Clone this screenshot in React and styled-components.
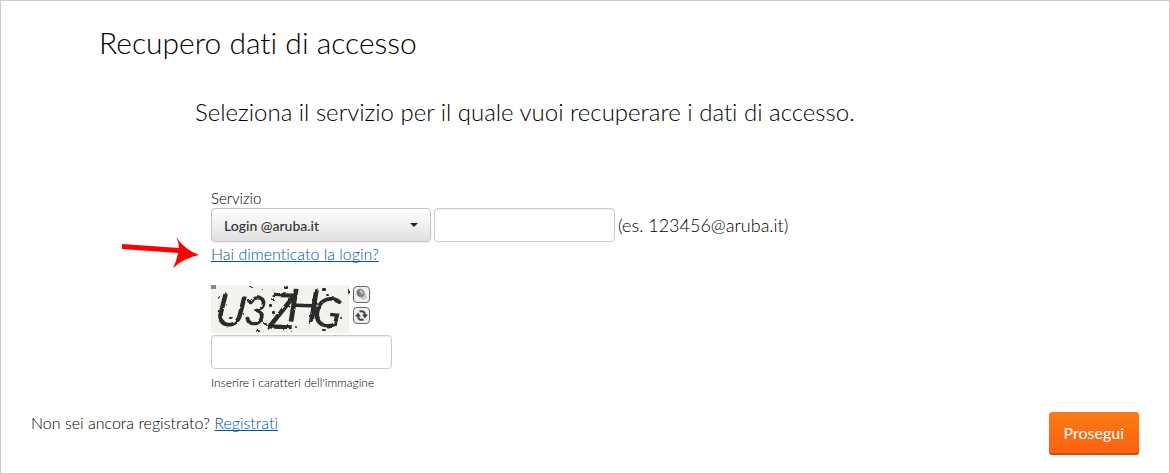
import React, { useState } from 'react'
import styled, { createGlobalStyle } from 'styled-components'

const GlobalStyle = createGlobalStyle`
  * {
    box-sizing: border-box;
  }
  body {
    margin: 0;
    background: #fff;
    color: #000;
    font-family: Lato, "Open Sans", sans-serif;
    font-size: 16px;
    font-weight: 300;
    font-variant-ligatures: none;
    line-height: 20px;
  }
`

const specks = [
  [6, 11, 3, 2], [14, 8, 2, 2], [17, 31, 4, 3], [38, 1, 3, 1], [37, 15, 3, 3],
  [51, 4, 2, 1], [45, 45, 4, 2], [50, 35, 2, 2], [53, 38, 3, 2], [58, 19, 3, 3],
  [60, 13, 3, 2], [64, 8, 3, 3], [61, 26, 3, 3], [73, 1, 4, 3], [80, 46, 2, 1],
  [84, 41, 2, 2], [98, 36, 2, 3], [111, 3, 4, 3], [115, 9, 3, 2],
  [111, 44, 4, 2], [124, 38, 2, 3], [137, 4, 1, 5], [129, 32, 2, 2], [44, 41, 2, 1],
]

const Captcha = () => (
  <CaptchaPicture viewBox="0 0 138 48" role="img" aria-label="Immagine di controllo">
    <filter id="rough" x="-10%" y="-10%" width="120%" height="120%">
      <feTurbulence type="fractalNoise" baseFrequency="0.2" numOctaves="2" seed="4" />
      <feDisplacementMap in="SourceGraphic" scale="3" />
    </filter>
    <rect width="138" height="48" fill="#f2f3ed" />
    <rect width="5" height="4" fill="#888" />
    <g filter="url(#rough)">
      <text x="5" y="41" fontSize="44" transform="rotate(7 17 24)">U</text>
      <text x="33" y="40" fontSize="40" transform="rotate(3 44 24)">3</text>
      <text x="57" y="44" fontSize="50" transform="rotate(2 70 24)">Z</text>
      <text x="76" y="37" fontSize="46" transform="rotate(2 92 24)">H</text>
      <text x="102" y="42" fontSize="42" transform="rotate(6 115 26)">G</text>
      {specks.map(([x, y, w, h]) => (
        <rect key={`${x}-${y}`} x={x} y={y} width={w} height={h} rx="1" fill="#2b2b2b" />
      ))}
    </g>
  </CaptchaPicture>
)

const SpeakerIcon = () => (
  <svg viewBox="1 1 15 15" aria-hidden="true">
    <path d="M7 12 L12 6 L14 12 L11 14 Z" fill="#c9c9c9" />
    <ellipse cx="7.500" cy="7" rx="4" ry="4.500" transform="rotate(-35 7.500 7)" fill="#858585" />
    <ellipse cx="8.500" cy="6" rx="1.500" ry="2.500" transform="rotate(-35 8.500 6)" fill="#bbb" />
    <path d="M5 5 Q4 8 7 10" fill="none" stroke="#666" />
  </svg>
)

const ReloadIcon = () => (
  <svg viewBox="1 1 15 15" aria-hidden="true">
    <path d="M6.500 4.500 Q11.500 3 12 8" fill="none" stroke="#444" strokeWidth="2" />
    <path d="M9 7.500 H15 L12 11.500 Z" fill="#444" />
    <path d="M10.500 12.500 Q5.500 14 5 9" fill="none" stroke="#444" strokeWidth="2" />
    <path d="M2 9.500 H8 L5 5.500 Z" fill="#444" />
  </svg>
)

const App = () => {
  const [login, setLogin] = useState('')
  const [code, setCode] = useState('')

  return (
    <>
      <GlobalStyle />
      <Page>
        <Title>Recupero dati di accesso</Title>
        <Subtitle>Seleziona il servizio per il quale vuoi recuperare i dati di accesso.</Subtitle>
        <Form onSubmit={e => e.preventDefault()}>
          <Fields>
            <Label htmlFor="service">Servizio</Label>
            <ServiceRow>
              <SelectBox>
                <Select id="service">
                  <option>Login @aruba.it</option>
                </Select>
              </SelectBox>
              <TextInput
                aria-label="Login"
                value={login}
                onChange={e => setLogin(e.target.value)}
              />
              <Example>(es. 123456@aruba.it)</Example>
            </ServiceRow>
            <ForgotLine>
              <Arrow viewBox="0 0 78 32" aria-hidden="true">
                <path d="M0 7 L57 11 Q57 5 54 0 Q63 13 77 18 Q62 21 51 31 Q55 23 56 16 L0 12 Z" fill="#f00" />
              </Arrow>
              <Link href="#login">Hai dimenticato la login?</Link>
            </ForgotLine>
            <CaptchaRow>
              <Captcha />
              <IconColumn>
                <IconButton type="button" aria-label="Ascolta"><SpeakerIcon /></IconButton>
                <IconButton type="button" aria-label="Ricarica"><ReloadIcon /></IconButton>
              </IconColumn>
            </CaptchaRow>
            <TextInput id="code" value={code} onChange={e => setCode(e.target.value)} />
            <Hint htmlFor="code">Inserire i caratteri dell'immagine</Hint>
          </Fields>
          <Footer>
            <p>Non sei ancora registrato? <Link href="#registrati">Registrati</Link></p>
            <SubmitButton type="submit">Prosegui</SubmitButton>
          </Footer>
        </Form>
      </Page>
    </>
  )
}

const Page = styled.main`
  min-height: 100vh;
  padding: 21px 30px 16px;
  border: 1px solid #ccc;
`

const Title = styled.h1`
  margin: 0 0 0 68px;
  font-size: 30px;
  font-weight: 300;
  line-height: 40px;
`

const Subtitle = styled.h2`
  margin: 34px 0 0 164px;
  font-size: 24px;
  font-weight: 300;
  line-height: 32px;
`

const Form = styled.form`
  margin-top: 60px;
`

const Fields = styled.div`
  display: flex;
  flex-direction: column;
  align-items: flex-start;
  margin-left: 180px;
`

const Label = styled.label`
  font-size: 15px;
`

const ServiceRow = styled.div`
  display: flex;
  align-items: center;
  gap: 3px;
`

const SelectBox = styled.div`
  position: relative;
  width: 220px;
  &::after {
    content: '';
    position: absolute;
    top: 15px;
    right: 13px;
    border: 4px solid transparent;
    border-top-color: #222;
    border-bottom: 0;
    pointer-events: none;
  }
`

const Select = styled.select`
  appearance: none;
  display: block;
  width: 100%;
  height: 34px;
  padding: 0 12px;
  border: 1px solid #c4c4c4;
  border-radius: 4px;
  background: linear-gradient(#fff, #e0e0e0);
  box-shadow: 0 1px 2px rgba(0, 0, 0, 0.08);
  color: #333;
  font-family: inherit;
  font-size: 14px;
  font-weight: 500;
`

const TextInput = styled.input`
  width: 181px;
  height: 34px;
  padding: 0 10px;
  border: 1px solid #ccc;
  border-radius: 4px;
  background: #fff;
  box-shadow: inset 0 1px 1px rgba(0, 0, 0, 0.08);
  font: inherit;
`

const Example = styled.span`
  font-size: 18px;
`

const ForgotLine = styled.div`
  position: relative;
  padding-top: 2px;
`

const Arrow = styled.svg`
  position: absolute;
  top: -5px;
  right: 100%;
  width: 78px;
  height: 32px;
  margin-right: 11px;
`

const Link = styled.a`
  color: #00569d;
  text-decoration: underline;
  text-decoration-skip-ink: none;
`

const CaptchaRow = styled.div`
  display: flex;
  gap: 4px;
  margin: 21px 0 2px;
`

const CaptchaPicture = styled.svg`
  width: 138px;
  height: 48px;
  overflow: visible;
  text {
    fill: #2b2b2b;
    font-family: Lato, sans-serif;
    font-style: italic;
    font-weight: 500;
  }
`

const IconColumn = styled.div`
  display: flex;
  flex-direction: column;
  gap: 4px;
  padding-top: 1px;
`

const IconButton = styled.button`
  width: 17px;
  height: 17px;
  padding: 0;
  border: 1px solid #666;
  border-radius: 4px;
  background: #f1f1f1;
  svg {
    display: block;
    width: 15px;
    height: 15px;
  }
`

const Hint = styled.label`
  margin-top: 4px;
  font-size: 12px;
`

const Footer = styled.div`
  display: flex;
  justify-content: space-between;
  align-items: flex-start;
  margin-top: 19px;
  p {
    margin: 1px 0 0;
  }
`

const SubmitButton = styled.button`
  padding: 11px 15px 10px;
  border: 0;
  border-bottom: 2px solid #c9500f;
  border-radius: 3px;
  background: linear-gradient(#fb7a14, #fb6112);
  color: #fff;
  font-family: inherit;
  font-size: 16px;
  line-height: 20px;
`

export default App
